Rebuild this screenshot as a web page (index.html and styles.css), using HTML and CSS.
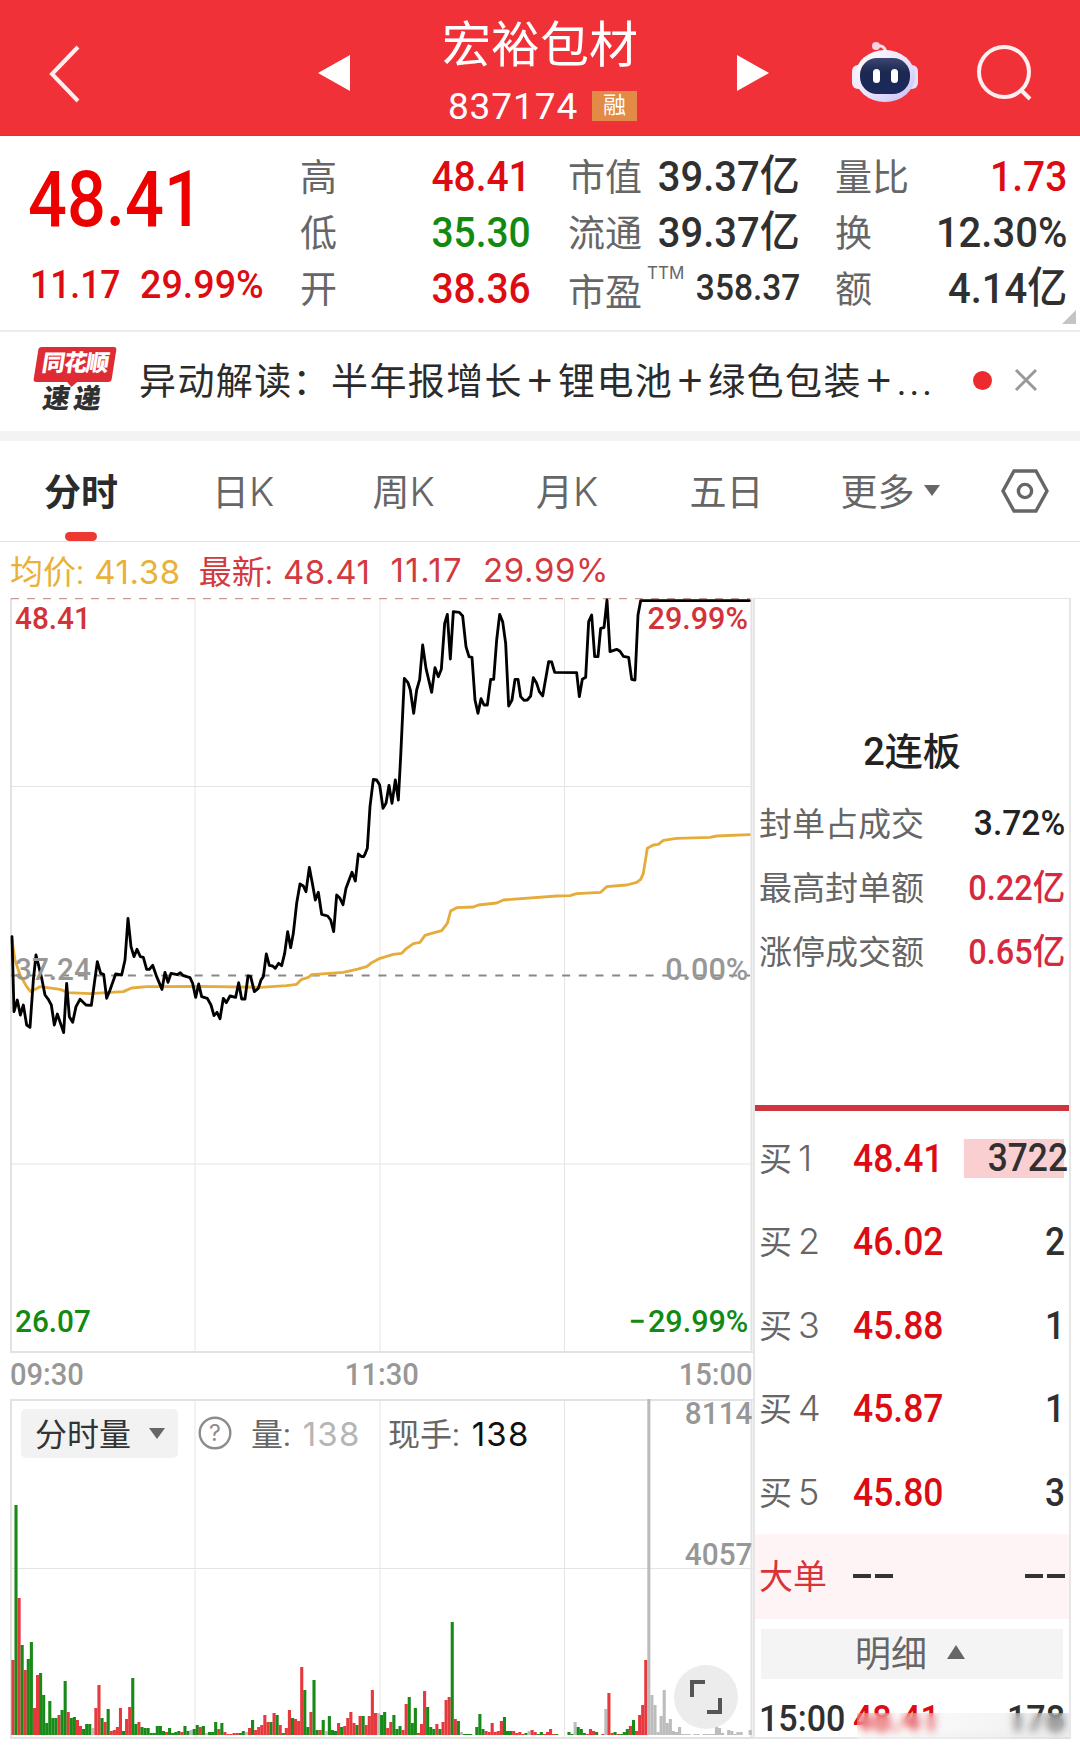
FILE: index.html
```html
<!DOCTYPE html>
<html lang="zh-CN">
<head>
  <meta charset="UTF-8" />
  <meta name="viewport" content="width=device-width, initial-scale=1.0" />
  <title>宏裕包材 837174</title>
  <link rel="stylesheet" href="styles.css">
</head>
<body>
  <!-- Top bar -->
  <header class="topbar">
    <svg class="back" width="32" height="58" viewBox="0 0 32 58"><path d="M29 2 L3 29 L29 56" /></svg>
    <svg class="prev" width="32" height="36" viewBox="0 0 32 36"><path d="M0 18 L32 0 V36 Z" /></svg>
    <div class="title">
      <h1>宏裕包材</h1>
      <div class="code"><span>837174</span><b>融</b></div>
    </div>
    <svg class="next" width="32" height="36" viewBox="0 0 32 36"><path d="M32 18 L0 0 V36 Z" /></svg>
    <svg class="robot" width="68" height="62" viewBox="0 0 68 62">
      <defs>
        <linearGradient id="shell" x1="0" y1="0" x2="1" y2="1">
          <stop offset="0" stop-color="#fff" />
          <stop offset="0.55" stop-color="#e9e2fb" />
          <stop offset="1" stop-color="#c3bef6" />
        </linearGradient>
        <linearGradient id="visor" x1="0" y1="0" x2="0" y2="1">
          <stop offset="0" stop-color="#3c4672" />
          <stop offset="0.4" stop-color="#1c2850" />
          <stop offset="1" stop-color="#1b2a5e" />
        </linearGradient>
      </defs>
      <path d="M24 5 Q34 3 35 12" fill="none" stroke="#f6dcee" stroke-width="3" />
      <circle cx="25" cy="5" r="4" fill="#fbd3e0" />
      <rect x="1" y="24" width="12" height="24" rx="6" fill="#f3eafc" />
      <rect x="55" y="24" width="12" height="24" rx="6" fill="#e6defa" />
      <ellipse cx="34" cy="35" rx="30" ry="26" fill="url(#shell)" />
      <rect x="9" y="17" width="50" height="36" rx="17" fill="url(#visor)" />
      <rect x="22" y="28" width="7" height="14" rx="3.5" fill="#fff" />
      <rect x="40" y="28" width="7" height="14" rx="3.5" fill="#fff" />
    </svg>
    <svg class="search" width="58" height="58" viewBox="0 0 58 58"><circle cx="28" cy="27" r="25" /><path d="M45 45 L54 54" /></svg>
  </header>

  <!-- Quote summary -->
  <section class="quote">
    <div class="price-box">
      <div class="price"><span class="num">48.41</span></div>
      <div class="change"><span class="num">11.17</span><span class="num percent">29.99%</span></div>
    </div>
    <dl class="stats">
      <dt>高</dt><dd class="red"><span class="num">48.41</span></dd>
      <dt>市值</dt><dd><span class="num">39.37亿</span></dd>
      <dt>量比</dt><dd class="red"><span class="num">1.73</span></dd>
      <dt>低</dt><dd class="green"><span class="num">35.30</span></dd>
      <dt>流通</dt><dd><span class="num">39.37亿</span></dd>
      <dt>换</dt><dd><span class="num">12.30%</span></dd>
      <dt>开</dt><dd class="red"><span class="num">38.36</span></dd>
      <dt class="pe">市盈<sup>TTM</sup></dt><dd class="small"><span class="num">358.37</span></dd>
      <dt>额</dt><dd><span class="num">4.14亿</span></dd>
    </dl>
    <i class="corner"></i>
  </section>

  <!-- News strip -->
  <section class="news">
    <div class="news-logo">
      <div class="logo-top"><span>同花顺</span></div>
      <div class="logo-bottom">速递</div>
    </div>
    <p>异动解读：半年报增长<i>+</i>锂电池<i>+</i>绿色包装<i>+</i><em>...</em></p>
    <span class="dot"></span>
    <svg class="close" width="24" height="24" viewBox="0 0 24 24"><path d="M2 2 L22 22 M22 2 L2 22" /></svg>
  </section>

  <!-- Period tabs -->
  <nav class="tabs">
    <span class="active">分时</span>
    <span>日<b>K</b></span>
    <span>周<b>K</b></span>
    <span>月<b>K</b></span>
    <span>五日</span>
    <span class="more">更多<i class="down"></i></span>
    <svg width="48" height="44" viewBox="0 0 48 44"><path d="M13 2 H35 L46 22 L35 42 H13 L2 22 Z" /><circle cx="24" cy="22" r="6.6" /></svg>
  </nav>

  <div class="legend">
    <span class="avg">均价: <b>41.38</b></span>
    <span>最新: <b>48.41</b></span>
    <span><b>11.17</b></span>
    <span><b>29.99%</b></span>
  </div>

  <main class="board">
    <div class="charts">
      <!-- Intraday price -->
      <div class="price-chart">
        <svg width="743" height="755" viewBox="0 0 743 755">
          <path class="grid" d="M0 188.500H743 M0 566H743 M185 0V755 M370 0V755 M554.500 0V755" />
          <path class="frame" d="M1 0V754 M0 754H743 M741.500 0V754" />
          <path class="limit" d="M1 0.500H740" />
          <path class="zero" d="M1 377.500H740" />
          <!-- morning half -->
          <g transform="translate(-10 242) scale(.33333)">
            <polyline class="avg-line" points="36,300 45,360 60,405 80,440 92,455 120,440 180,448 205,458 270,461 370,455 395,444 440,440 600,439 780,442 860,437 890,433 905,418 925,412 935,404 1030,397 1080,386" />
            <polyline class="price-line" points="36,290 42,515 52,480 61,525 70,495 80,555 90,562 100,420 108,345 118,385 125,415 135,465 145,478 154,495 163,555 172,522 191,578 200,430 208,530 218,547 228,500 240,478 258,495 274,496 283,430 292,365 302,400 311,403 320,475 330,450 347,402 365,405 375,360 384,235 393,320 402,350 411,328 421,350 430,352 440,388 448,388 458,376 470,410 486,448 495,397 504,427 513,400 532,404 541,398 550,407 570,413 578,430 587,472 596,432 605,470 622,475 633,495 642,527 651,517 660,536 670,475 679,488 690,468 707,472 716,428 725,477 735,477 744,408 752,410 763,455 775,445 783,420 790,410 799,342 808,376 818,378 826,385 836,370 845,377 854,340 863,275 872,323 880,280 890,190 900,132 910,138 918,155 928,82 937,130 946,180 955,157 965,223 983,228 992,240 1001,275 1010,165 1020,175 1029,194 1038,145 1056,97 1066,123 1075,42 1085,50 1090,50" />
          </g>
          <!-- afternoon half -->
          <g transform="translate(350 -8) scale(.33333)">
            <polyline class="avg-line" points="0,1135 20,1130 35,1118 60,1105 100,1093 125,1090 140,1075 160,1061 180,1057 195,1036 215,1030 245,1022 262,1000 272,963 290,953 340,951 355,945 410,939 430,930 590,918 630,917 650,911 722,907 740,890 800,885 830,877 842,868 850,850 862,775 880,765 895,763 910,751 950,745 1050,742 1070,738 1168,734" />
            <polyline class="price-line" points="10,800 14,795 22,775 30,650 40,568 50,570 59,585 69,655 78,640 87,586 96,640 106,570 115,630 122,500 133,265 144,278 151,300 161,370 170,300 179,268 188,165 198,235 215,307 225,233 235,260 244,238 254,100 262,73 271,207 280,65 298,67 308,78 318,170 327,200 336,202 345,330 354,370 363,326 372,345 382,345 392,268 401,268 410,150 419,73 428,95 437,160 446,348 456,330 465,268 474,268 482,320 492,331 502,330 512,318 520,263 530,280 538,305 548,318 566,215 575,216 584,247 650,248 658,320 667,268 677,262 686,95 695,75 704,200 714,200 722,115 732,113 741,30 750,185 770,178 780,184 790,199 806,202 815,268 825,270 834,75 842,32 1168,32" />
          </g>
        </svg>
        <span class="tag top left red2">48.41</span>
        <span class="tag top right red2">29.99%</span>
        <span class="tag mid left">37.24</span>
        <span class="tag mid right">0.00%</span>
        <span class="tag bottom left green">26.07</span>
        <span class="tag bottom right green"><u>−</u>29.99%</span>
      </div>

      <div class="times"><span>09:30</span><span>11:30</span><span>15:00</span></div>

      <!-- Volume -->
      <div class="volume-chart">
        <svg id="volume" width="743" height="340" viewBox="0 0 743 340">
          <path class="grid" d="M0 169.500H743 M185 0V340 M370 0V340 M554.500 0V340" />
          <path class="frame" d="M1 0V339 M0 1H743 M0 339H743 M741.500 0V339" />
        </svg>
        <div class="volume-head">
          <span class="picker">分时量<i class="down"></i></span>
          <svg width="34" height="34" viewBox="0 0 34 34"><circle cx="17" cy="17" r="15.300" /><text x="17" y="25" text-anchor="middle">?</text></svg>
          <span class="vol">量: <b>138</b></span>
          <span class="now">现手: <b>138</b></span>
        </div>
        <span class="scale max">8114</span>
        <span class="scale half">4057</span>
        <span class="expand"><svg width="32" height="34" viewBox="0 0 32 34"><path d="M2 17 V2 H15 M30 18 V32 H17" /></svg></span>
      </div>
    </div>

    <!-- Order book -->
    <aside class="book">
      <div class="limit-info">
        <h2>2连板</h2>
        <p>封单占成交<span class="num">3.72%</span></p>
        <p>最高封单额<span class="num crimson">0.22亿</span></p>
        <p>涨停成交额<span class="num crimson">0.65亿</span></p>
      </div>
      <ul class="bids">
        <li><label>买<b>1</b></label><span class="num bid">48.41</span><span class="num qty full">3722</span></li>
        <li><label>买<b>2</b></label><span class="num bid">46.02</span><span class="num qty">2</span></li>
        <li><label>买<b>3</b></label><span class="num bid">45.88</span><span class="num qty">1</span></li>
        <li><label>买<b>4</b></label><span class="num bid">45.87</span><span class="num qty">1</span></li>
        <li><label>买<b>5</b></label><span class="num bid">45.80</span><span class="num qty">3</span></li>
        <li class="big"><label>大单</label><span class="dashes"></span><span class="dashes"></span></li>
      </ul>
      <div class="detail"><span>明细</span><i class="up"></i></div>
      <div class="trade">
        <span class="num">15:00</span><span class="num bid">48.41</span><span class="num qty">178</span>
        <i class="smear"></i>
      </div>
    </aside>
  </main>

  <script>
    // One bar per minute: colour (r up, g down, n after the limit) and height in px
    const bars = 'r75 g230 r137 g90 r65 g76 g93 r27 r60 g62 g40 g12 g34 g17 g17 r20 g25 g54 r23 g17 ' +
      'g18 r15 r9 g6 g11 g11 n7 r27 r50 g17 r13 g26 r4 r5 r8 r27 g4 r16 r28 g57 ' +
      'g11 r13 g8 g7 g7 g2 g2 g9 g9 g4 r3 g7 g2 g3 g4 r3 g9 g4 n5 g6 ' +
      'g10 r8 g9 n2 g3 g3 g13 r6 g12 r3 r1 r1 r2 r2 g2 g4 n3 r7 g15 r5 ' +
      'r8 r10 r20 r13 g13 r22 g20 r10 g2 r7 r25 g17 r16 r14 r68 g45 g8 r23 g55 g5 ' +
      'r5 g15 n4 g19 g5 g4 r12 g8 r9 r17 r23 r12 g10 r19 g19 r10 r19 r45 r22 n22 ' +
      'g20 g23 r7 r13 g20 g6 g9 r5 r31 g38 g12 g27 r2 r11 r44 g28 g8 g6 r11 g6 ' +
      'r13 r35 r38 g113 r16 g14 n3 g1 g1 g1 n0 g8 g21 g6 r4 r3 r12 r3 r4 r14 ' +
      'g18 g4 g4 r4 r2 r3 r1 g2 n4 r5 r3 g1 g3 r1 r3 r6 r1 g1 n0 n0 ' +
      'n0 g3 g1 n13 g8 g6 g2 r1 r6 r4 g3 n0 r1 n26 r42 r2 g3 r1 g1 g3 ' +
      'g6 r9 g15 r4 r20 r30 r75 n336 n40 n30 n3 n19 n45 n12 n16 n4 n3 n8 n1 n1 ' +
      'n1 n0 n1 n1 n0 n1 n1 n1 n1 n9 n7 n2 n0 n5 n4 n1 n3 n3 n0 n0 n5';
    const colors = { r: '#e5393d', g: '#178a17', n: '#bcbcbc' };
    const volume = document.getElementById('volume');

    bars.split(' ').forEach(function(bar, i) {
      const h = Number(bar.slice(1));
      const rect = document.createElementNS('http://www.w3.org/2000/svg', 'rect');
      rect.setAttribute('x', (1.4 + i * 3.072).toFixed(2));
      rect.setAttribute('y', 336 - h);
      rect.setAttribute('width', 3.1);
      rect.setAttribute('height', h);
      rect.setAttribute('fill', colors[bar[0]]);
      volume.appendChild(rect);
    });
  </script>
</body>
</html>
```
FILE: styles.css
```css
* {
  box-sizing: border-box;
}
body {
  margin: 0;
  width: 1080px;
  height: 1752px;
  overflow: hidden;
  background: #fff;
  color: #303030;
  font-family: Roboto, "Noto Sans CJK SC", sans-serif;
}
h1, h2, p, dl, dd, ul {
  margin: 0;
  padding: 0;
}
i, em {
  font-style: normal;
}
/* Narrow figures used for every price */
.num {
  display: inline-block;
  font-weight: 500;
  white-space: nowrap;
  transform: scaleX(.93);
  transform-origin: right center;
}
.red, .bid {
  color: #dd0c12;
}
.green {
  color: #128a12;
}
/* Top bar */
.topbar {
  display: flex;
  align-items: center;
  height: 136px;
  padding: 12px 30px 0 49px;
  background: #f03238;
  border-bottom: 1px solid #b5444a;
}
.topbar > * {
  flex-shrink: 0;
}
.back, .search {
  fill: none;
  stroke: #ffeef0;
  stroke-width: 4;
}
.prev, .next {
  fill: #fff;
  margin-top: -2px;
}
.prev {
  margin-left: 237px;
}
.title {
  width: 220px;
  margin: -10px 87px 0 80px;
  text-align: center;
  color: #fff;
}
.title h1 {
  font-size: 49px;
  line-height: 64px;
  font-weight: 400;
  margin-top: 12px;
  white-space: nowrap;
}
.code {
  display: flex;
  justify-content: center;
  align-items: center;
  gap: 14px;
  height: 58px;
  margin-top: -1px;
  padding-left: 5px;
  font-size: 37px;
  letter-spacing: .9px;
}
.code b {
  width: 45px;
  height: 30px;
  line-height: 29px;
  background: #e28a46;
  font-size: 23px;
  font-weight: 400;
  letter-spacing: 0;
}
.robot {
  margin: -4px 0 0 82px;
}
.search {
  margin-left: 57px;
}
/* Quote summary */
.quote {
  position: relative;
  display: flex;
  height: 196px;
  border-bottom: 2px solid #ececec;
}
.price-box {
  width: 300px;
  padding-left: 28px;
  color: #dd0c12;
}
.price-box .num {
  transform-origin: left center;
}
.price {
  height: 121px;
  line-height: 129px;
  font-size: 77px;
  color: #ec0000;
}
.price .num {
  transform: scaleX(.89);
}
.change {
  display: flex;
  gap: 10px;
  padding-left: 2px;
  font-size: 39px;
  line-height: 57px;
}
.change .num {
  transform: scaleX(.91);
}
.change .percent {
  transform: scaleX(.965);
}
.stats {
  display: grid;
  grid-template-columns: 110px 121px 110px 159px 110px 157px;
  grid-template-rows: 56px 56px 56px;
  padding-top: 12px;
  align-items: center;
}
.stats dt {
  margin-top: -2px;
  font-size: 37px;
  color: #666;
  white-space: nowrap;
}
.stats dt:nth-of-type(3n+2) {
  margin-left: 37px;
}
.stats dt:nth-of-type(3n) {
  margin-left: 35px;
}
.stats dd {
  font-size: 43px;
  line-height: 54px;
  white-space: nowrap;
  display: flex;
  justify-content: flex-end;
}
.stats .red .num, .stats .green .num {
  transform: scaleX(.905);
}
.stats .small {
  font-size: 36px;
}
.stats .pe {
  position: relative;
  margin-top: 3px;
}
.pe sup {
  position: absolute;
  left: 79px;
  top: 0;
  font: 17px/20px Inter, sans-serif;
}
.corner {
  position: absolute;
  right: 4px;
  bottom: 6px;
  border: 7px solid transparent;
  border-right-color: #c4c4c4;
  border-bottom-color: #c4c4c4;
}
/* News strip */
.news {
  display: flex;
  align-items: center;
  height: 109px;
  padding-left: 34px;
  border-bottom: 10px solid #f3f3f3;
}
.news-logo {
  width: 84px;
  margin-right: 21px;
}
.logo-top {
  position: relative;
  width: 78px;
  height: 35px;
  margin: 0 0 0 2px;
  background: #df2b33;
  border-radius: 3px;
  color: #fff;
  transform: skewX(-9deg);
  font-size: 23px;
  font-weight: 900;
  line-height: 34px;
  text-align: center;
  letter-spacing: -1px;
}
.logo-top::after {
  content: "";
  position: absolute;
  left: 34px;
  top: 35px;
  border: 5px solid transparent;
  border-top-color: #df2b33;
}
.logo-bottom {
  width: 78px;
  padding-left: 9px;
  font-size: 27px;
  font-weight: 900;
  line-height: 34px;
  letter-spacing: 4px;
  transform: skewX(-9deg);
}
.news p {
  width: 806px;
  margin-top: -6px;
  font-size: 37px;
  letter-spacing: 1.400px;
  color: #2b2b2b;
  white-space: nowrap;
}
.news p i {
  display: inline-block;
  width: 35px;
  font-family: "Noto Sans CJK SC", sans-serif;
  font-size: 44px;
  line-height: 0;
  text-align: center;
  position: relative;
  top: 2px;
}
.news p em {
  letter-spacing: 3px;
}
.dot {
  width: 19px;
  height: 19px;
  margin: -2px 22px 0 28px;
  border-radius: 50%;
  background: #ed2b2e;
}
.close {
  margin-top: -3px;
  fill: none;
  stroke: #999;
  stroke-width: 3;
}
/* Period tabs */
.tabs {
  display: grid;
  grid-template-columns: 162px 162px 159px 168px 151px 176px 94px;
  align-items: center;
  justify-items: center;
  height: 101px;
  border-bottom: 1px solid #e3e3e3;
  font-size: 37px;
  color: #666;
}
.tabs span {
  margin-top: -2px;
}
.tabs b {
  font-family: Inter, sans-serif;
  font-weight: 300;
  font-size: 39px;
}
.tabs .active {
  position: relative;
  font-weight: 700;
  color: #2b2b2b;
}
.tabs .active::after {
  content: "";
  position: absolute;
  left: 21px;
  bottom: -24px;
  width: 32px;
  height: 9px;
  border-radius: 5px;
  background: #ec3a33;
}
.tabs svg {
  fill: none;
  stroke: #666;
  stroke-width: 3.4;
}
.more {
  display: flex;
  align-items: center;
  gap: 9px;
}
.down {
  display: inline-block;
  border: 8px solid transparent;
  border-top: 11px solid #666;
  border-bottom: 0;
}
.up {
  display: inline-block;
  border: 9px solid transparent;
  border-bottom: 14px solid #666;
  border-top: 0;
}
/* Legend above the chart */
.legend {
  display: flex;
  align-items: center;
  height: 56px;
  padding: 0 0 0 10px;
  gap: 18px;
  font-size: 33px;
  color: #d33a40;
  white-space: pre;
}
.legend b {
  margin-left: 2px;
  font-family: Inter, sans-serif;
  font-weight: 400;
  font-size: 33px;
  letter-spacing: .6px;
}
.legend span:nth-child(3) b {
  letter-spacing: 1.4px;
}
.legend .avg {
  color: #e8b23a;
}
/* Charts and order book */
.board {
  display: grid;
  grid-template-columns: 743px 318px;
  margin-left: 10px;
}
.grid {
  fill: none;
  stroke: #e4e4e4;
  stroke-width: 1;
}
.frame {
  fill: none;
  stroke: #e2e2e2;
  stroke-width: 2;
}
.limit {
  stroke: #c99a94;
  stroke-width: 1.5;
  stroke-dasharray: 8 8;
}
.zero {
  stroke: #888;
  stroke-width: 2;
  stroke-dasharray: 8 8.7;
}
.avg-line, .price-line {
  fill: none;
  stroke-width: 8.5;
  stroke-linejoin: round;
  stroke-linecap: round;
}
.avg-line {
  stroke: #e5ac3c;
}
.price-line {
  stroke: #000;
}
.price-chart, .volume-chart {
  position: relative;
}
.price-chart {
  height: 755px;
}
.price-chart svg, #volume {
  display: block;
}
.tag, .scale {
  position: absolute;
  font-size: 31px;
  line-height: 36px;
  font-weight: 500;
  color: #979797;
  transform: scaleX(.96);
}
.tag u {
  text-decoration: none;
  letter-spacing: 2px;
}
.left {
  left: 5px;
  transform-origin: left center;
}
.right {
  right: 5px;
  transform-origin: right center;
}
.tag.right {
  transform: scaleX(.985);
}
.top {
  top: 3px;
}
.mid {
  top: 354px;
}
.bottom {
  top: 706px;
}
.red2 {
  color: #d23339;
}
.tag.green {
  color: #128a12;
}
.times {
  display: grid;
  grid-template-columns: 1fr 1fr 1fr;
  height: 46px;
  line-height: 43px;
  font-size: 31px;
  font-weight: 500;
  color: #979797;
}
.times span {
  transform: scaleX(.94);
  transform-origin: left center;
}
.times span:nth-child(2) {
  text-align: center;
  transform-origin: center;
}
.times span:nth-child(3) {
  text-align: right;
  transform-origin: right center;
}
.volume-head {
  position: absolute;
  left: 11px;
  top: 9px;
  display: flex;
  align-items: center;
  height: 50px;
  font-size: 32px;
  color: #666;
  white-space: pre;
}
.picker {
  display: flex;
  align-items: center;
  gap: 18px;
  width: 157px;
  height: 49px;
  padding: 0 0 3px 14px;
  border-radius: 5px;
  background: #f2f2f2;
  color: #333;
}
.picker .down {
  margin-top: 3px;
}
.volume-head svg {
  margin-left: 20px;
  fill: none;
  stroke: #8c8c8c;
  stroke-width: 2.4;
}
.volume-head text {
  font: 23px Inter, sans-serif;
  fill: #8c8c8c;
  stroke: none;
}
.volume-head b {
  margin-left: 4px;
  font-family: Inter, sans-serif;
  font-weight: 400;
  font-size: 33px;
  letter-spacing: 1.2px;
}
.vol, .now {
  margin-top: -3px;
}
.vol {
  width: 137px;
  margin-left: 19px;
}
.vol b {
  color: #b5b5b5;
}
.now b {
  color: #111;
}
.scale {
  right: 1px;
  transform-origin: right center;
}
.max {
  top: -3px;
}
.half {
  top: 138px;
}
.expand {
  position: absolute;
  right: 15px;
  bottom: 10px;
  width: 64px;
  height: 64px;
  border-radius: 50%;
  background: #ececec;
  display: flex;
  align-items: center;
  justify-content: center;
}
.expand path {
  fill: none;
  stroke: #555;
  stroke-width: 4;
}
/* Order book */
.book {
  height: 1141px;
  border: 2px solid #e6e6e6;
  border-top-width: 1px;
}
.limit-info {
  height: 512px;
  padding: 121px 4px 0 4px;
  border-bottom: 6px solid #cf353c;
}
.limit-info h2 {
  text-align: center;
  font-size: 38px;
  line-height: 64px;
  font-weight: 500;
  color: #222;
}
.limit-info p {
  display: flex;
  align-items: center;
  justify-content: space-between;
  height: 64px;
  font-size: 33px;
  color: #666;
}
.limit-info h2 + p {
  margin-top: 6px;
}
.limit-info .num {
  margin-top: 2px;
  font-size: 35px;
  color: #222;
  transform: scaleX(.96);
}
.limit-info .num.crimson {
  margin-top: -3px;
  color: #d8283f;
  transform: scaleX(.93);
}
.bids {
  list-style: none;
  padding-top: 5px;
}
.bids li {
  display: grid;
  grid-template-columns: 94px 100px 1fr;
  align-items: center;
  height: 83.500px;
  padding: 2px 4px 0;
  font-size: 39px;
}
.bids label {
  margin-top: -4px;
  font-size: 33px;
  color: #666;
}
.bids label b {
  margin-left: 6px;
  font: 300 36px Inter, sans-serif;
}
.bids .bid {
  transform: scaleX(.91);
  transform-origin: left center;
}
.qty {
  text-align: right;
}
.bids .qty {
  transform: scaleX(.905);
}
.full {
  justify-self: end;
  width: 115px;
  line-height: 39px;
  background: linear-gradient(90deg, #f9cfd2 96%, transparent 96%);
}
.bids .big {
  height: 85px;
  padding-top: 0;
  background: #fff4f5;
}
.bids .big label {
  font-size: 34px;
  color: #d93338;
}
.dashes {
  width: 40px;
  height: 4px;
  background: linear-gradient(90deg, #333 18px, transparent 18px, transparent 22px, #333 22px);
}
.dashes:last-child {
  justify-self: end;
}
.detail {
  display: flex;
  align-items: center;
  justify-content: center;
  gap: 20px;
  height: 50px;
  margin: 10px 6px 0;
  padding-right: 4px;
  background: #f4f4f4;
  font-size: 36px;
  color: #666;
}
.detail span {
  margin-top: -5px;
}
.detail .up {
  margin-top: -3px;
}
.trade {
  position: relative;
  display: grid;
  grid-template-columns: 94px 100px 1fr;
  height: 60px;
  padding: 19px 4px 0;
  font-size: 37px;
  line-height: 41px;
}
.trade .num {
  transform: scaleX(.92);
  transform-origin: left center;
}
.trade .qty {
  transform-origin: right center;
}
/* Frosted strip over the lower half of the last trade */
.smear {
  position: absolute;
  left: 102px;
  right: 0;
  top: 34px;
  bottom: 0;
  background: linear-gradient(90deg, rgba(255, 255, 255, .1), rgba(190, 190, 190, .25));
  backdrop-filter: blur(4px);
}
```
